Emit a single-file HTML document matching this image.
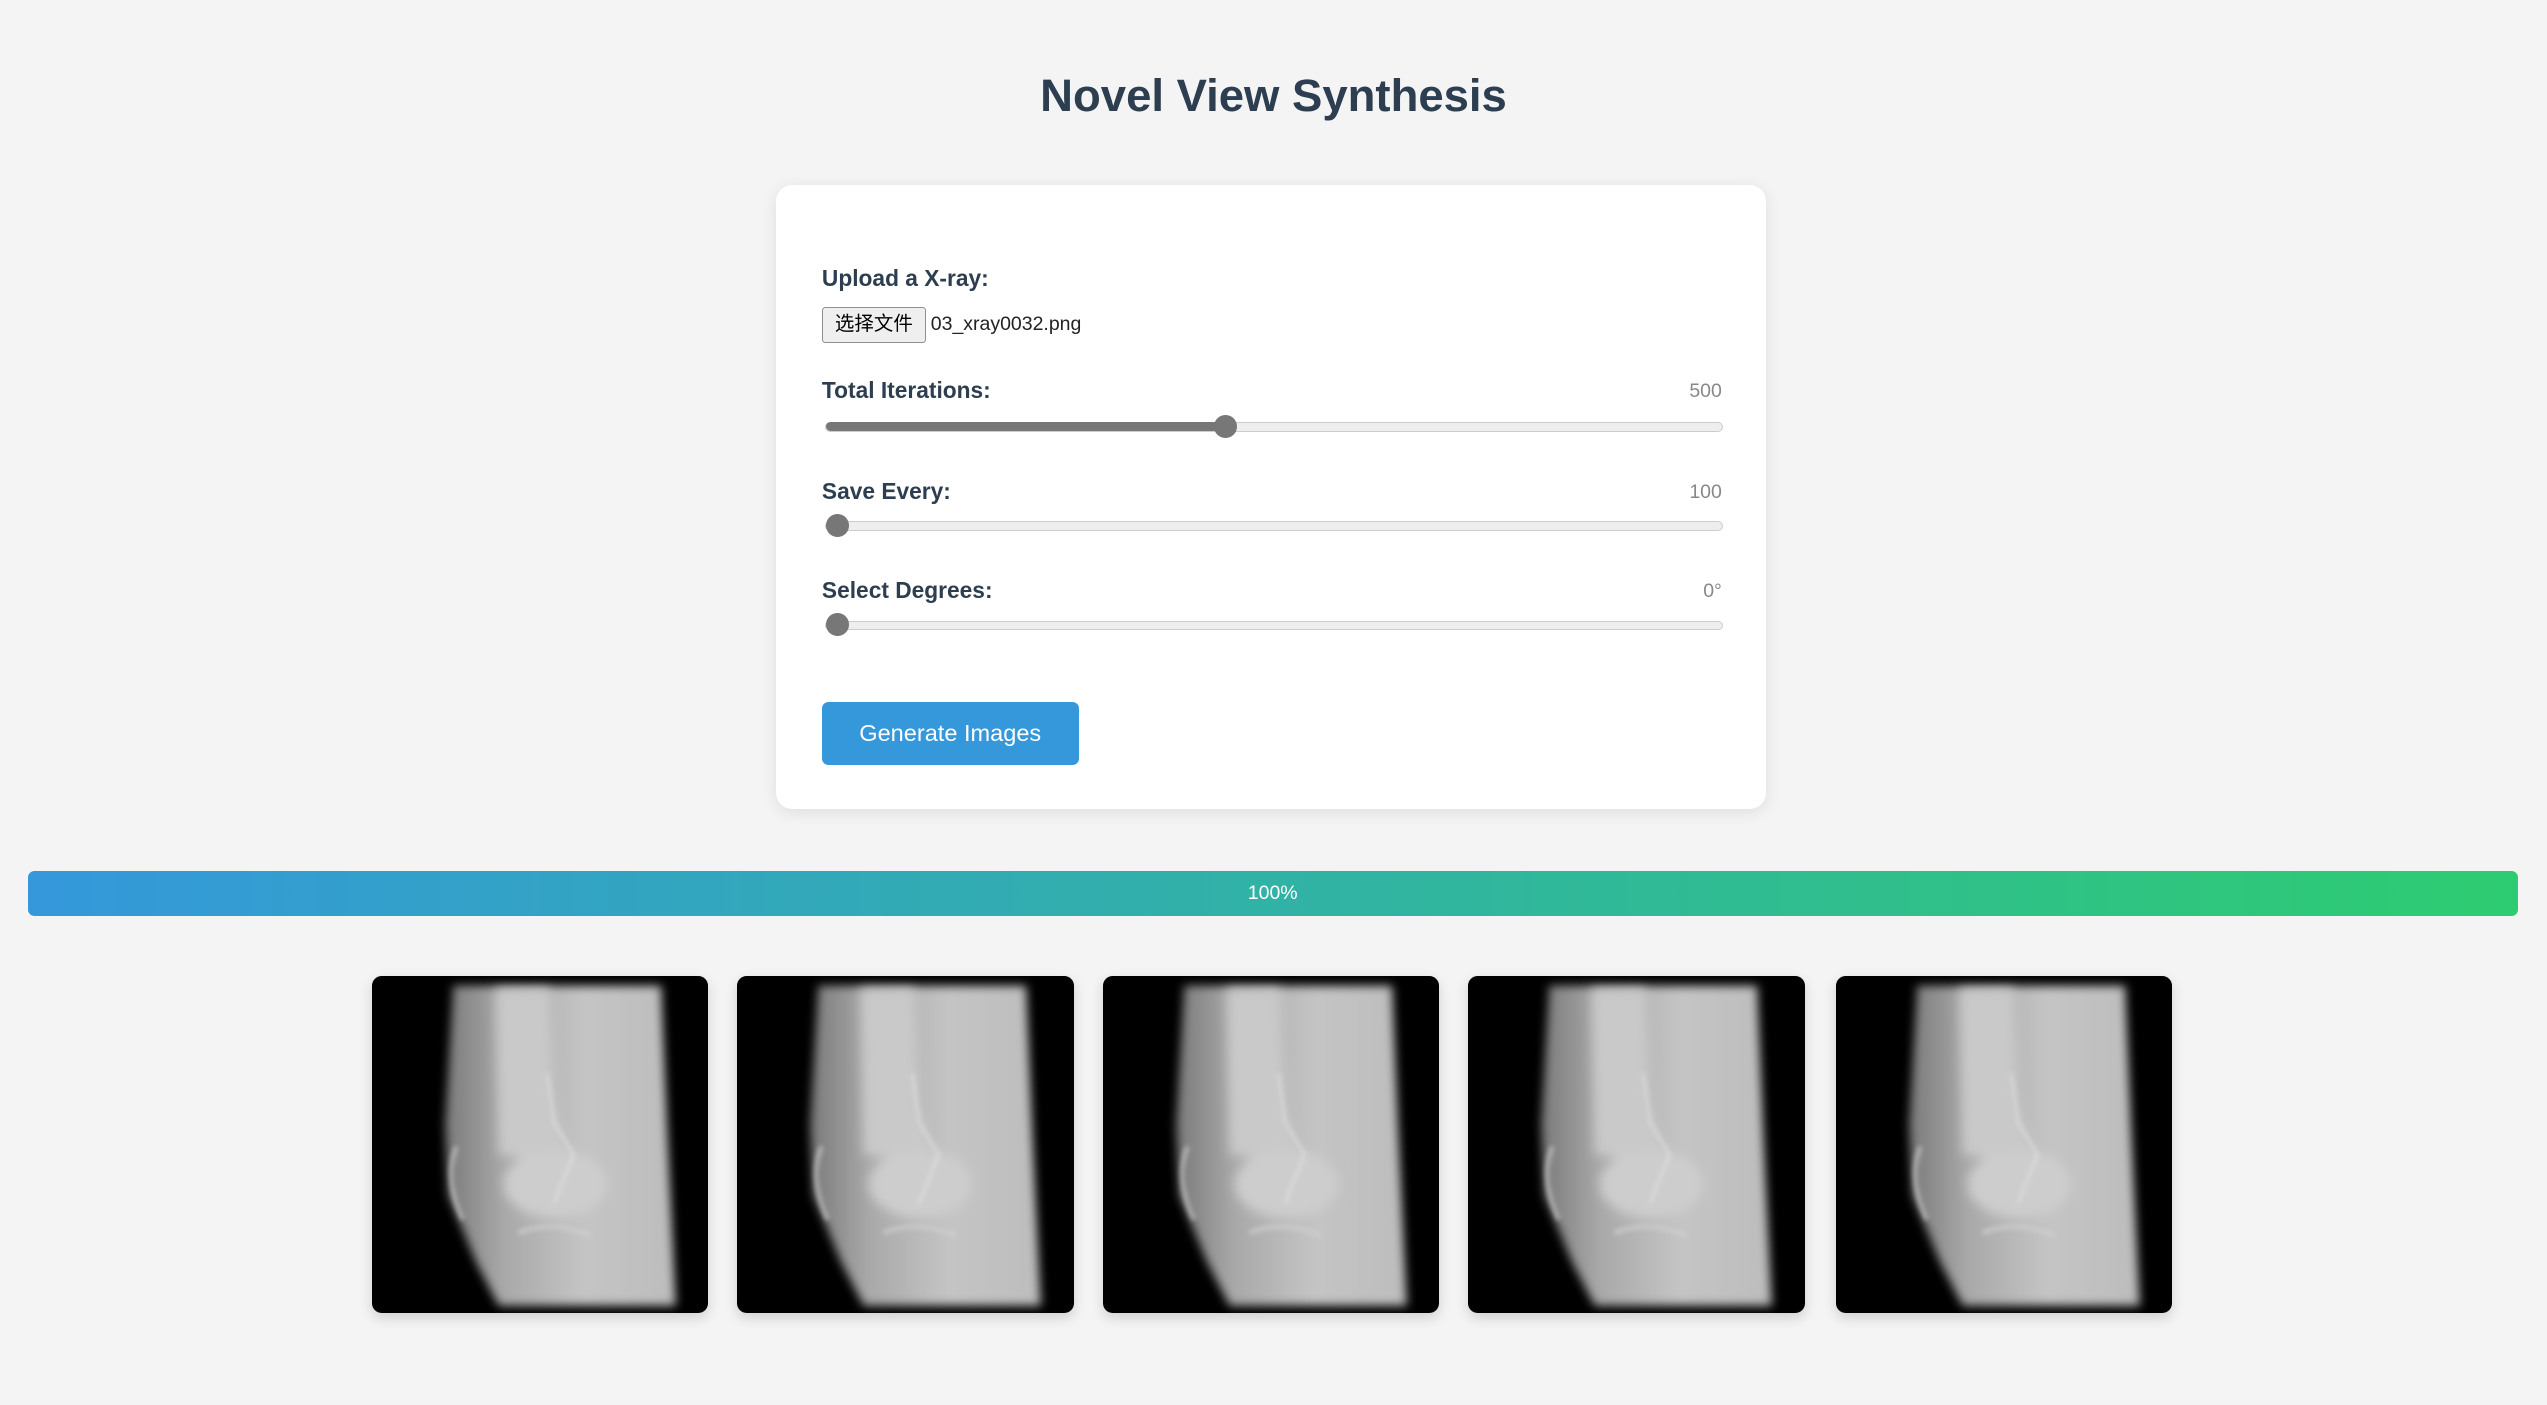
<!DOCTYPE html>
<html><head><meta charset="utf-8">
<style>
html{zoom:1.6244}
body{margin:0;background:#f4f4f4;font-family:"Liberation Sans","Noto Sans CJK SC",sans-serif;width:1568px;height:865px;position:relative;overflow:hidden}
h1{position:absolute;top:38px;left:0;width:1568px;margin:0;text-align:center;font-size:28px;font-weight:bold;color:#2c3e50;line-height:42px}
.card{position:absolute;left:478px;top:114px;width:609px;height:384px;background:#fff;border-radius:10px;box-shadow:0 2px 10px rgba(0,0,0,0.09)}
.lbl{position:absolute;left:28px;font-size:14px;font-weight:bold;color:#2c3e50}
.val{position:absolute;right:27px;font-size:12px;color:#888}
.track{position:absolute;left:30px;width:553px;height:6px;background:#eee;border:1px solid #ccc;border-radius:4px;box-sizing:border-box}
.fill{position:absolute;left:0;top:-1px;height:6px;background:#777;border-radius:4px}
.thumb{position:absolute;width:14px;height:14px;border-radius:50%;background:#777;top:-5px}
.fbtn{position:absolute;left:28px;top:75px;width:64px;height:22px;box-sizing:border-box;border:1px solid #8f8f8f;background:#efefef;border-radius:2px;font-size:12px;line-height:20px;text-align:center;color:#000}
.fname{position:absolute;left:95px;top:79px;font-size:12px;color:#222}
.btn{position:absolute;left:28px;top:318px;width:158px;height:39px;background:#3498db;border-radius:4px;color:#fff;font-size:14.5px;line-height:39px;text-align:center}
.prog{position:absolute;left:17px;top:536px;width:1533px;height:28px;border-radius:4px;background:linear-gradient(90deg,#3498db,#2ecc71);color:#fff;font-size:12px;line-height:28px;text-align:center}
.img{position:absolute;top:601px;width:207px;height:207px;border-radius:6px;overflow:hidden;background:#000;box-shadow:0 3px 8px rgba(0,0,0,0.15)}
</style></head><body>
<h1>Novel View Synthesis</h1>
<div class="card">
<div class="lbl" style="top:49px">Upload a X-ray:</div>
<div class="fbtn">选择文件</div><div class="fname">03_xray0032.png</div>
<div class="lbl" style="top:118px">Total Iterations:</div><div class="val" style="top:120px">500</div>
<div class="track" style="top:146px"><div class="fill" style="width:247px"></div><div class="thumb" style="left:239px"></div></div>
<div class="lbl" style="top:180px">Save Every:</div><div class="val" style="top:182px">100</div>
<div class="track" style="top:207px"><div class="thumb" style="left:0px"></div></div>
<div class="lbl" style="top:241px">Select Degrees:</div><div class="val" style="top:243px">0°</div>
<div class="track" style="top:268px"><div class="thumb" style="left:0px"></div></div>
<div class="btn">Generate Images</div>
</div>
<div class="prog">100%</div>

<svg width="0" height="0" style="position:absolute"><defs>
<filter id="b" x="-20%" y="-20%" width="140%" height="140%"><feGaussianBlur stdDeviation="3"/></filter>
<filter id="b2" x="-30%" y="-30%" width="160%" height="160%"><feGaussianBlur stdDeviation="3.5"/></filter>
<filter id="b3"><feGaussianBlur stdDeviation="1.5"/></filter>
<linearGradient id="g" x1="0" x2="1"><stop offset="0" stop-color="#7a7a7a"/><stop offset="0.25" stop-color="#a8a8a8"/><stop offset="0.6" stop-color="#c4c4c4"/><stop offset="1" stop-color="#bdbdbd"/></linearGradient>
</defs></svg>

<div class="img" style="left:229px"><svg width="207" height="207" viewBox="0 0 207 207"><g filter="url(#b)"><path d="M50 6 L178 6 L182 100 L187 203 L78 203 L64 176 L47 135 L45 92 Z" fill="url(#g)"/></g><g filter="url(#b2)"><path d="M76 8 L109 8 L112 80 L122 112 L100 113 L78 110 Z" fill="#c9c9c9"/><ellipse cx="113" cy="128" rx="32" ry="21" fill="#cdcdcd"/></g><g filter="url(#b3)" opacity="0.7"><path d="M52 105 Q44 125 56 150" stroke="#c8c8c8" stroke-width="3" fill="none"/><path d="M90 158 Q112 150 135 160" stroke="#cfcfcf" stroke-width="3" fill="none"/><path d="M108 60 L112 90 L124 110 L112 140" stroke="#e0e0e0" stroke-width="2" fill="none"/></g></svg></div>
<div class="img" style="left:454px"><svg width="207" height="207" viewBox="0 0 207 207"><g filter="url(#b)"><path d="M50 6 L178 6 L182 100 L187 203 L78 203 L64 176 L47 135 L45 92 Z" fill="url(#g)"/></g><g filter="url(#b2)"><path d="M76 8 L109 8 L112 80 L122 112 L100 113 L78 110 Z" fill="#c9c9c9"/><ellipse cx="113" cy="128" rx="32" ry="21" fill="#cdcdcd"/></g><g filter="url(#b3)" opacity="0.7"><path d="M52 105 Q44 125 56 150" stroke="#c8c8c8" stroke-width="3" fill="none"/><path d="M90 158 Q112 150 135 160" stroke="#cfcfcf" stroke-width="3" fill="none"/><path d="M108 60 L112 90 L124 110 L112 140" stroke="#e0e0e0" stroke-width="2" fill="none"/></g></svg></div>
<div class="img" style="left:679px"><svg width="207" height="207" viewBox="0 0 207 207"><g filter="url(#b)"><path d="M50 6 L178 6 L182 100 L187 203 L78 203 L64 176 L47 135 L45 92 Z" fill="url(#g)"/></g><g filter="url(#b2)"><path d="M76 8 L109 8 L112 80 L122 112 L100 113 L78 110 Z" fill="#c9c9c9"/><ellipse cx="113" cy="128" rx="32" ry="21" fill="#cdcdcd"/></g><g filter="url(#b3)" opacity="0.7"><path d="M52 105 Q44 125 56 150" stroke="#c8c8c8" stroke-width="3" fill="none"/><path d="M90 158 Q112 150 135 160" stroke="#cfcfcf" stroke-width="3" fill="none"/><path d="M108 60 L112 90 L124 110 L112 140" stroke="#e0e0e0" stroke-width="2" fill="none"/></g></svg></div>
<div class="img" style="left:904px"><svg width="207" height="207" viewBox="0 0 207 207"><g filter="url(#b)"><path d="M50 6 L178 6 L182 100 L187 203 L78 203 L64 176 L47 135 L45 92 Z" fill="url(#g)"/></g><g filter="url(#b2)"><path d="M76 8 L109 8 L112 80 L122 112 L100 113 L78 110 Z" fill="#c9c9c9"/><ellipse cx="113" cy="128" rx="32" ry="21" fill="#cdcdcd"/></g><g filter="url(#b3)" opacity="0.7"><path d="M52 105 Q44 125 56 150" stroke="#c8c8c8" stroke-width="3" fill="none"/><path d="M90 158 Q112 150 135 160" stroke="#cfcfcf" stroke-width="3" fill="none"/><path d="M108 60 L112 90 L124 110 L112 140" stroke="#e0e0e0" stroke-width="2" fill="none"/></g></svg></div>
<div class="img" style="left:1130px"><svg width="207" height="207" viewBox="0 0 207 207"><g filter="url(#b)"><path d="M50 6 L178 6 L182 100 L187 203 L78 203 L64 176 L47 135 L45 92 Z" fill="url(#g)"/></g><g filter="url(#b2)"><path d="M76 8 L109 8 L112 80 L122 112 L100 113 L78 110 Z" fill="#c9c9c9"/><ellipse cx="113" cy="128" rx="32" ry="21" fill="#cdcdcd"/></g><g filter="url(#b3)" opacity="0.7"><path d="M52 105 Q44 125 56 150" stroke="#c8c8c8" stroke-width="3" fill="none"/><path d="M90 158 Q112 150 135 160" stroke="#cfcfcf" stroke-width="3" fill="none"/><path d="M108 60 L112 90 L124 110 L112 140" stroke="#e0e0e0" stroke-width="2" fill="none"/></g></svg></div>
</body></html>
